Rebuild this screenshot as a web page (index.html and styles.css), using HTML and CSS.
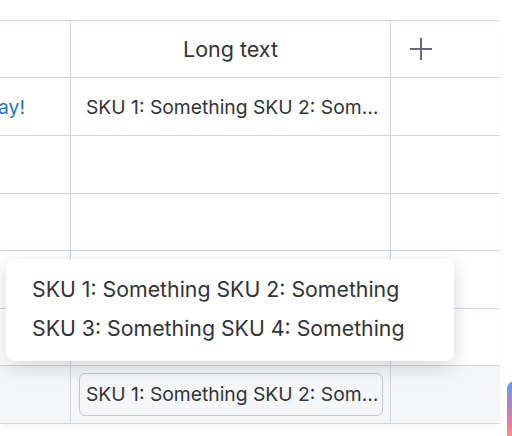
FILE: index.html
```html
<!DOCTYPE html>
<html>
<head>
<meta charset="utf-8">
<link rel="stylesheet" href="styles.css">
</head>
<body>
<div class="board">
  <div class="table">
    <div class="cell first header"></div>
    <div class="cell header title">Long text</div>
    <div class="cell header add">
      <svg width="22" height="22" viewBox="0 0 22 22"><path d="M11 0v22M0 11h22" stroke="#676879" stroke-width="2" fill="none"/></svg>
    </div>

    <div class="cell first"><span class="link">Go to monday!</span></div>
    <div class="cell text"><span class="clip">SKU 1: Something SKU 2: Something SKU 3: Something SKU 4: Something</span></div>
    <div class="cell"></div>

    <div class="cell first"></div><div class="cell"></div><div class="cell"></div>
    <div class="cell first"></div><div class="cell"></div><div class="cell"></div>
    <div class="cell first"></div><div class="cell"></div><div class="cell"></div>
    <div class="cell first"></div><div class="cell"></div><div class="cell"></div>

    <div class="cell first active"></div>
    <div class="cell active chipcell"><div class="chip"><span class="clip">SKU 1: Something SKU 2: Something SKU 3: Something SKU 4: Something</span></div></div>
    <div class="cell active"></div>
  </div>

  <div class="tooltip">
    <div class="line">SKU 1: Something SKU 2: Something</div>
    <div class="line">SKU 3: Something SKU 4: Something</div>
  </div>
  <div class="fab"></div>
</div>
</body>
</html>
```

FILE: styles.css
```css
html, body {
  margin: 0;
  padding: 0;
  background: #ffffff;
  overflow: hidden;
  width: 512px;
  height: 436px;
}
body {
  font-family: "Inter", "Liberation Sans", sans-serif;
  color: #323338;
}
.board {
  position: relative;
  width: 512px;
  height: 436px;
  padding-top: 20px;
  box-sizing: border-box;
}
.table {
  width: 500px;
  display: grid;
  grid-template-columns: 71px 320px 109px;
  grid-auto-rows: 57.5px;
  border-top: 1px solid #d0d4e4;
  box-shadow: 0 5px 6px -3px rgba(0, 0, 0, 0.06);
}
.cell {
  box-sizing: border-box;
  border-bottom: 1px solid #d0d4e4;
  border-right: 1px solid #d0d4e4;
  display: flex;
  align-items: center;
  min-width: 0;
  overflow: hidden;
}
.cell:nth-child(3n) {
  border-right: none;
}
.header {
  height: 57px;
}
.title {
  justify-content: center;
  font-size: 21.5px;
  padding-bottom: 1px;
}
.add {
  padding-left: 19px;
}
.first {
  justify-content: flex-end;
  padding-right: 45px;
}
.link {
  white-space: nowrap;
  color: #1f76c2;
  font-size: 19.3px;
}
.text {
  padding: 0 8px 0 15px;
  font-size: 19.3px;
}
.clip {
  white-space: nowrap;
  overflow: hidden;
  text-overflow: ellipsis;
  display: block;
  min-width: 0;
}
.active {
  background: #f5f6f8;
}
.chipcell {
  padding: 0 7px 0 8px;
  font-size: 19.3px;
}
.chip {
  flex: 1;
  min-width: 0;
  height: 43px;
  box-sizing: border-box;
  border: 1px solid #c3c6d4;
  border-radius: 6px;
  display: flex;
  align-items: center;
  padding: 0 0 0 6px;
}
.tooltip {
  position: absolute;
  left: 6px;
  top: 259px;
  width: 448px;
  height: 102px;
  box-sizing: border-box;
  background: #ffffff;
  border-radius: 8px;
  box-shadow: 0 6px 20px rgba(0, 0, 0, 0.16);
  padding: 11px 26px;
  font-size: 21.3px;
}
.line {
  height: 39px;
  line-height: 39px;
  white-space: nowrap;
}
.fab {
  position: absolute;
  left: 507px;
  top: 381px;
  width: 20px;
  height: 60px;
  border-top-left-radius: 8px;
  background: linear-gradient(180deg, #5a9fde 0%, #a688c4 35%, #e57aa0 70%, #efa083 100%);
}
```
